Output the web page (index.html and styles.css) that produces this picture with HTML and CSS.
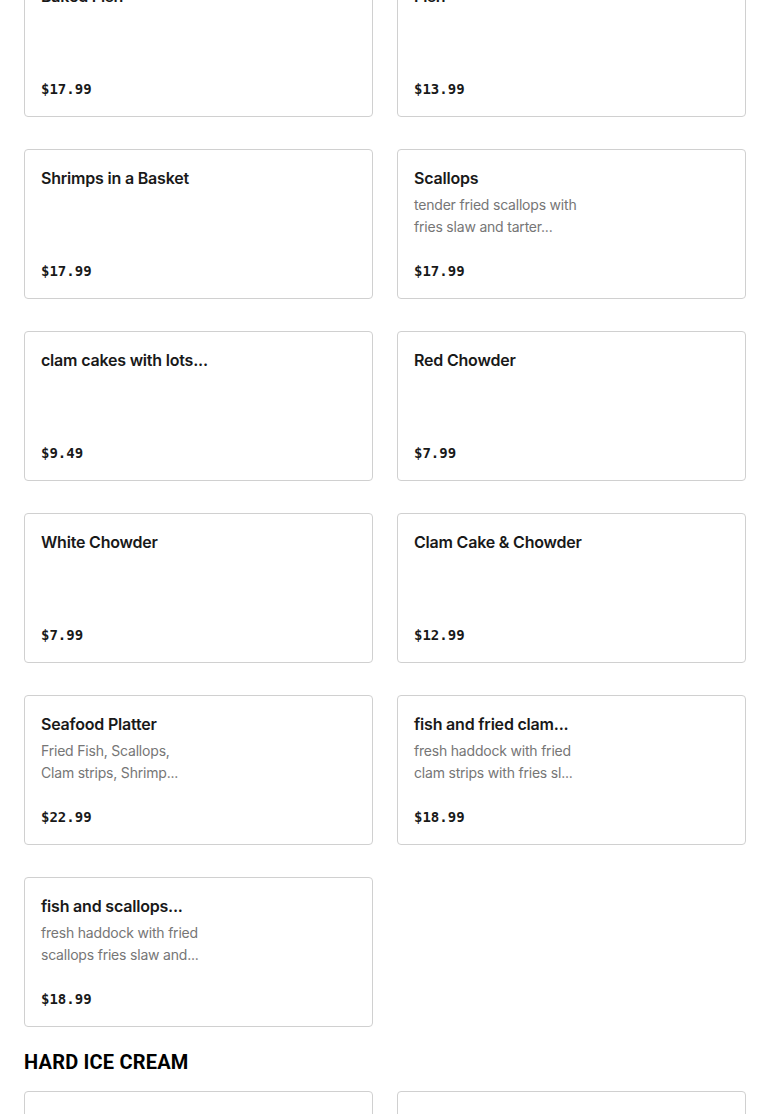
FILE: index.html
```html
<!DOCTYPE html>
<html lang="en">
<head>
<meta charset="utf-8">
<title>Menu</title>
<link rel="stylesheet" href="styles.css">
</head>
<body>
<main class="menu">
  <section class="section">
    <div class="grid">
      <div class="card"><div class="title">Baked Fish</div><div class="price">$17.99</div></div>
      <div class="card"><div class="title">Fish</div><div class="price">$13.99</div></div>
      <div class="card"><div class="title">Shrimps in a Basket</div><div class="price">$17.99</div></div>
      <div class="card"><div class="title">Scallops</div><div class="desc">tender fried scallops with<br>fries slaw and tarter...</div><div class="price">$17.99</div></div>
      <div class="card"><div class="title">clam cakes with lots...</div><div class="price">$9.49</div></div>
      <div class="card"><div class="title">Red Chowder</div><div class="price">$7.99</div></div>
      <div class="card"><div class="title">White Chowder</div><div class="price">$7.99</div></div>
      <div class="card"><div class="title">Clam Cake &amp; Chowder</div><div class="price">$12.99</div></div>
      <div class="card"><div class="title">Seafood Platter</div><div class="desc">Fried Fish, Scallops,<br>Clam strips, Shrimp...</div><div class="price">$22.99</div></div>
      <div class="card"><div class="title">fish and fried clam...</div><div class="desc">fresh haddock with fried<br>clam strips with fries sl...</div><div class="price">$18.99</div></div>
      <div class="card"><div class="title">fish and scallops...</div><div class="desc">fresh haddock with fried<br>scallops fries slaw and...</div><div class="price">$18.99</div></div>
    </div>
  </section>
  <section class="section">
    <h2 class="heading">HARD ICE CREAM</h2>
    <div class="grid">
      <div class="card"></div>
      <div class="card"></div>
    </div>
  </section>
</main>
</body>
</html>
```
FILE: styles.css
```css
html, body {
  margin: 0;
  padding: 0;
  background: #ffffff;
}
body {
  font-family: Inter, "Noto Sans", sans-serif;
  color: #191919;
  overflow: hidden;
}
.menu {
  margin-top: -33px;
  padding: 0 24px;
}
.section {
  margin-bottom: 23px;
}
.grid {
  display: grid;
  grid-template-columns: 1fr 1fr;
  column-gap: 24px;
  row-gap: 32px;
}
.card {
  box-sizing: border-box;
  height: 150px;
  border: 1px solid #d0d0d0;
  border-radius: 4px;
  padding: 16px;
  display: flex;
  flex-direction: column;
}
.title {
  font-size: 16px;
  line-height: 24px;
  font-weight: 600;
  letter-spacing: -0.2px;
  color: #191919;
}
.desc {
  margin-top: 4px;
  font-size: 14px;
  line-height: 22px;
  letter-spacing: -0.2px;
  color: #767676;
}
.price {
  margin-top: auto;
  margin-bottom: 1px;
  font-family: "DejaVu Sans Mono", monospace;
  font-weight: 700;
  font-size: 14px;
  line-height: 20px;
  color: #191919;
}
.heading {
  margin: 0 0 17px;
  font-family: Roboto, "Liberation Sans", sans-serif;
  font-weight: 700;
  font-size: 20px;
  line-height: 24px;
  letter-spacing: 0.2px;
  color: #000000;
}
```
